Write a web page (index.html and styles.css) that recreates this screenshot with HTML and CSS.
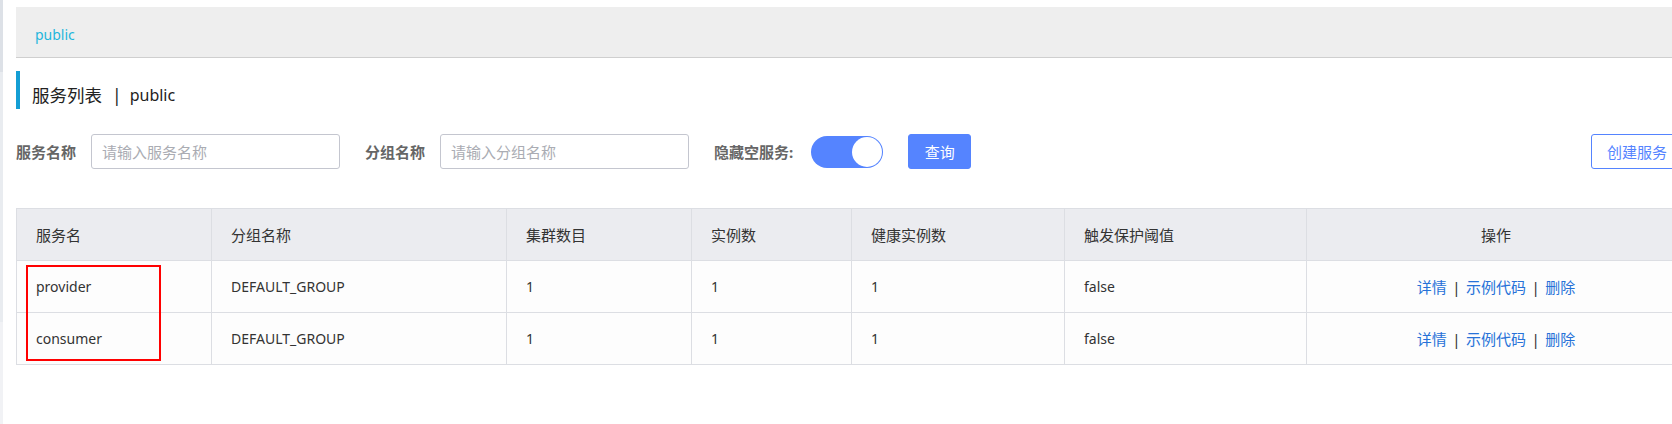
FILE: index.html
```html
<!DOCTYPE html>
<html lang="zh-CN">
<head>
    <meta charset="UTF-8">
    <title>服务列表</title>
    <link rel="stylesheet" href="styles.css">
</head>
<body>
<div class="side-line"></div>
<div class="main">
    <!--命名空间-->
    <div class="ns-bar">
        <span class="ns-item">public</span>
    </div>
    <!--标题-->
    <div class="page-title">
        <span class="title-cn">服务列表</span>
        <span class="title-sep">|</span>
        <span class="title-ns">public</span>
    </div>
    <!--搜索-->
    <div class="search-row">
        <label class="search-label">服务名称</label>
        <input class="search-input" type="text" placeholder="请输入服务名称">
        <label class="search-label">分组名称</label>
        <input class="search-input" type="text" placeholder="请输入分组名称">
        <label class="search-label label-hide">隐藏空服务:</label>
        <span class="switch switch-on"><span class="switch-knob"></span></span>
        <button class="btn btn-primary">查询</button>
        <button class="btn btn-normal btn-create">创建服务</button>
    </div>
    <!--列表-->
    <div class="table-wrap">
        <table class="service-table">
            <colgroup>
                <col style="width: 195px">
                <col style="width: 295px">
                <col style="width: 185px">
                <col style="width: 160px">
                <col style="width: 213px">
                <col style="width: 242px">
                <col>
            </colgroup>
            <thead>
            <tr>
                <th>服务名</th>
                <th>分组名称</th>
                <th>集群数目</th>
                <th>实例数</th>
                <th>健康实例数</th>
                <th>触发保护阈值</th>
                <th class="op-cell">操作</th>
            </tr>
            </thead>
            <tbody>
            <tr>
                <td>provider</td>
                <td>DEFAULT_GROUP</td>
                <td>1</td>
                <td>1</td>
                <td>1</td>
                <td>false</td>
                <td class="op-cell"><a href="#">详情</a><span class="op-sep">|</span><a href="#">示例代码</a><span class="op-sep">|</span><a href="#">删除</a></td>
            </tr>
            <tr>
                <td>consumer</td>
                <td>DEFAULT_GROUP</td>
                <td>1</td>
                <td>1</td>
                <td>1</td>
                <td>false</td>
                <td class="op-cell"><a href="#">详情</a><span class="op-sep">|</span><a href="#">示例代码</a><span class="op-sep">|</span><a href="#">删除</a></td>
            </tr>
            </tbody>
        </table>
        <div class="mark-box"></div>
    </div>
</div>
</body>
</html>
```

FILE: styles.css
```css
html, body {
    margin: 0;
    padding: 0;
    overflow: hidden;
    background-color: #fff;
}

body {
    font-family: "Noto Sans", "Noto Sans CJK SC", sans-serif;
    font-size: 14px;
    color: #333;
    position: relative;
    height: 424px;
}

.side-line {
    position: absolute;
    left: 0;
    top: 0;
    width: 3px;
    height: 424px;
    background: linear-gradient(#dde1e7 0, #dde1e7 72px, #e9ecf0 72px, #e9ecf0 322px, #f1f2f5 322px);
}

.main {
    width: 1670px;
    margin-left: 16px;
    padding-top: 7px;
}

.ns-bar {
    height: 51px;
    box-sizing: border-box;
    background-color: #eeeeee;
    border-bottom: 1px solid #cfcfcf;
    display: flex;
    align-items: center;
    padding: 5px 0 0 19px;
}

.ns-item {
    color: #1fb6dc;
    font-size: 14px;
}

.page-title {
    margin-top: 13px;
    height: 38px;
    box-sizing: border-box;
    border-left: 4px solid #149ed4;
    padding: 9px 0 0 12px;
    display: flex;
    align-items: center;
    font-size: 17.5px;
    color: #222;
}

.title-sep {
    margin: 0 8px 0 10px;
}

.title-ns {
    font-size: 16px;
}

.search-row {
    margin-top: 25px;
    height: 35px;
    display: flex;
    align-items: center;
    padding-right: 3px;
}

.search-label {
    font-weight: bold;
    font-size: 15px;
    color: #666;
    margin-right: 15px;
}

.label-hide {
    margin-right: 18px;
}

.search-input {
    width: 249px;
    height: 35px;
    box-sizing: border-box;
    border: 1px solid #c4c6cf;
    border-radius: 3px;
    padding: 0 10px;
    font-family: inherit;
    font-size: 15px;
    margin-right: 25px;
    outline: none;
}

.search-input::placeholder {
    color: #aaacb3;
}

.switch {
    width: 72px;
    height: 32px;
    border-radius: 16px;
    background-color: #5584ff;
    margin-right: 25px;
    display: flex;
    align-items: center;
    justify-content: flex-end;
    padding: 0 1px;
    box-sizing: border-box;
}

.switch-knob {
    width: 30px;
    height: 30px;
    border-radius: 50%;
    background-color: #fff;
}

.btn {
    height: 35px;
    box-sizing: border-box;
    border-radius: 3px;
    font-family: inherit;
    font-size: 15px;
    padding: 0 15px;
    cursor: pointer;
}

.btn-primary {
    width: 63px;
    background-color: #5584ff;
    border: 1px solid #5584ff;
    color: #fff;
}

.btn-normal {
    background-color: #fff;
    border: 1px solid #5584ff;
    color: #5584ff;
}

.btn-create {
    margin-left: auto;
    width: 92px;
}

.table-wrap {
    margin-top: 39px;
    position: relative;
}

.service-table {
    width: 1670px;
    border-collapse: collapse;
    table-layout: fixed;
    border: 1px solid #dcdee3;
}

.service-table th,
.service-table td {
    height: 51px;
    padding: 0 0 0 19px;
    text-align: left;
    font-size: 14px;
    font-weight: normal;
    color: #333;
    border: 1px solid #dcdee3;
    white-space: nowrap;
}

.service-table th {
    background-color: #ebecf0;
    font-size: 15px;
}

.service-table td {
    background-color: #fdfdfd;
}

.service-table .op-cell {
    text-align: center;
    padding: 0;
    font-size: 15px;
}

.op-cell a {
    color: #2772d8;
    text-decoration: none;
}

.op-sep {
    margin: 0 5.5px;
    color: #333;
}

/*标注框*/
.mark-box {
    position: absolute;
    left: 10px;
    top: 57px;
    width: 131px;
    height: 92px;
    border: 2px solid #ff0000;
}
```
